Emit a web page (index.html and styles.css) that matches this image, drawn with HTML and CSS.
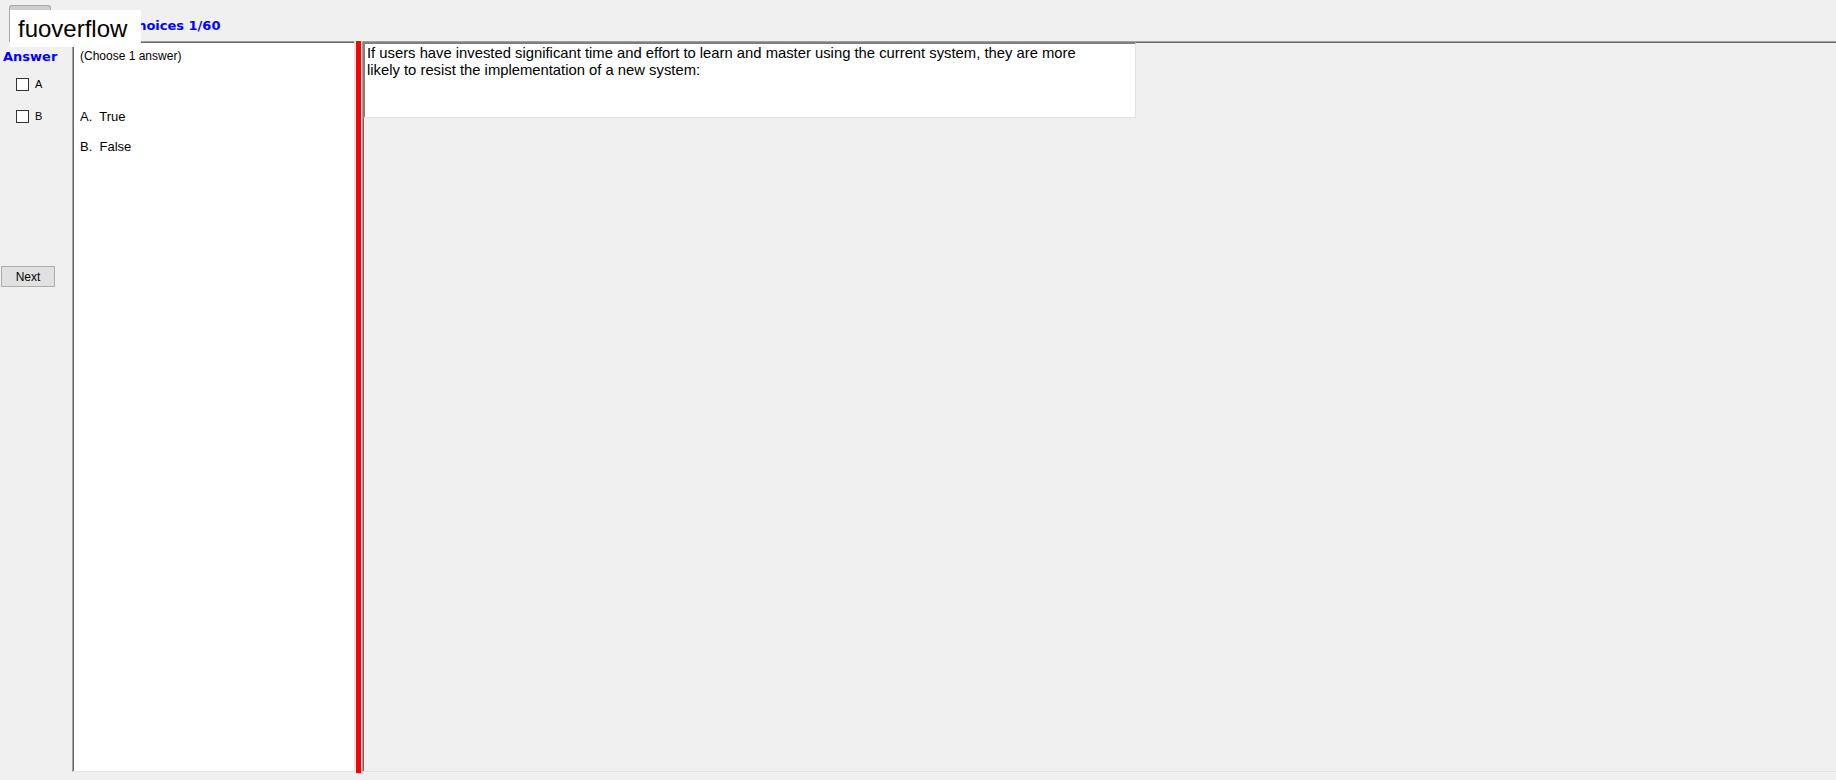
FILE: index.html
```html
<!DOCTYPE html>
<html lang="en">
<head>
  <meta charset="UTF-8">
  <meta name="viewport" content="width=device-width, initial-scale=1.0">
  <title>Multiple choices</title>
  <link rel="stylesheet" href="styles.css">
</head>
<body>
  <div class="window">
    <div class="header">
      <div class="tab"></div>
      <div class="title">Multiple choices 1/60</div>
    </div>

    <div class="main">
      <!-- answer column on the far left -->
      <div class="side">
        <div class="answer-label">Answer</div>
        <label class="pick pick-a"><input type="checkbox"> A</label>
        <label class="pick pick-b"><input type="checkbox"> B</label>
        <button class="next">Next</button>
      </div>

      <div class="options">
        <div class="hint">(Choose 1 answer)</div>
        <div class="option first">A.&nbsp; True</div>
        <div class="option">B.&nbsp; False</div>
      </div>

      <div class="splitter"></div>

      <div class="content">
        <div class="question">If users have invested significant time and effort to learn and master using the current system, they are more<br>likely to resist the implementation of a new system:</div>
      </div>
    </div>

    <div class="brand">fuoverflow</div>
  </div>
</body>
</html>
```

FILE: styles.css
```css
body {
  margin: 0;
  background-color: #f0f0f0;
  font-family: 'Liberation Sans', Arial, sans-serif;
  color: #000;
}
.window {
  position: relative;
  width: 1836px;
  height: 780px;
  overflow: hidden;
}

/* top strip with the tab and the counter */
.header {
  display: flex;
  align-items: flex-start;
  height: 41px;
}
.tab {
  margin-left: 9px;
  margin-top: 5px;
  width: 40px;
  height: 36px;
  background-color: #cdcdcd;
  border: 1px solid #a8a8a8;
  border-bottom: none;
  border-radius: 3px 3px 0 0;
}
.title {
  margin-left: 14px;
  margin-top: 18px;
  font-family: 'DejaVu Sans', Verdana, sans-serif;
  font-weight: bold;
  font-size: 13px;
  color: #0000ff;
  white-space: nowrap;
}

.main {
  display: flex;
  align-items: flex-start;
  height: 732px;
}

/* answer column */
.side {
  width: 72px;
  flex-shrink: 0;
  display: flex;
  flex-direction: column;
  align-items: flex-start;
  padding-top: 8px;
}
.answer-label {
  padding-left: 3px;
  font-family: 'DejaVu Sans', Verdana, sans-serif;
  font-weight: bold;
  font-size: 13px;
  color: #0000ff;
}
.pick {
  display: flex;
  align-items: center;
  gap: 6px;
  padding-left: 16px;
  font-size: 11px;
  line-height: 13px;
}
.pick-a {
  margin-top: 14px;
}
.pick-b {
  margin-top: 19px;
}
.pick input {
  appearance: none;
  -webkit-appearance: none;
  margin: 0;
  width: 13px;
  height: 13px;
  border: 1px solid #333;
  background-color: #fff;
}
.next {
  margin-top: 143px;
  margin-left: 1px;
  width: 54px;
  height: 21px;
  padding: 0;
  background-color: #e1e1e1;
  border: 1px solid #adadad;
  font-family: 'Liberation Sans', Arial, sans-serif;
  font-size: 12px;
  color: #000;
}

/* white list of choices */
.options {
  box-sizing: border-box;
  width: 283px;
  height: 731px;
  flex-shrink: 0;
  background-color: #fff;
  border-top: 1px solid #a0a0a0;
  border-left: 1px solid #a0a0a0;
  border-right: 1px solid #e3e3e3;
  border-bottom: 1px solid #e3e3e3;
  box-shadow: inset 1px 1px 0 #696969;
  padding: 7px 0 0 7px;
}
.hint {
  font-size: 12px;
  line-height: 14px;
}
.option {
  height: 30px;
  font-size: 13px;
  line-height: 16px;
}
.option.first {
  margin-top: 46px;
}

.splitter {
  width: 5px;
  height: 732px;
  margin-left: 1px;
  flex-shrink: 0;
  background-color: #ff0000;
}

.content {
  box-sizing: border-box;
  flex: 1;
  height: 731px;
  margin-left: 1px;
  border-top: 1px solid #a0a0a0;
  border-left: 1px solid #a0a0a0;
  border-bottom: 1px solid #e3e3e3;
  box-shadow: inset 1px 1px 0 #696969;
}
.question {
  box-sizing: border-box;
  width: 773px;
  height: 76px;
  background-color: #fff;
  border-top: 2px solid #7f7f7f;
  border-left: 2px solid #7f7f7f;
  border-right: 1px solid #e3e3e3;
  border-bottom: 1px solid #e3e3e3;
  padding: 1px 0 0 2px;
  font-size: 14.8px;
  line-height: 17px;
  white-space: nowrap;
}

/* label pinned over the top-left corner */
.brand {
  position: absolute;
  left: 10px;
  top: 10px;
  box-sizing: border-box;
  width: 131px;
  height: 37px;
  padding: 5px 0 0 8px;
  background-color: #fff;
  font-size: 24px;
  line-height: 27px;
  white-space: nowrap;
}
```
